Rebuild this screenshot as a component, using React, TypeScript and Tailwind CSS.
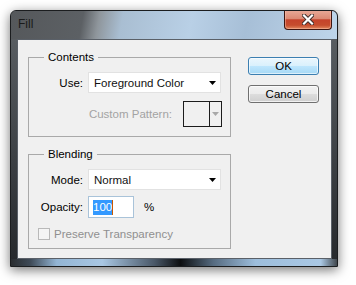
import React from 'react';

const FONT = { fontFamily: '"Liberation Sans", Arial, sans-serif' };

function DropArrow({ color = '#000' }: { color?: string }) {
  return (
    <svg width="7" height="4" viewBox="0 0 7 4">
      <path d="M0 0 H7 L3.5 4 Z" fill={color} />
    </svg>
  );
}

function Select({ value, h }: { value: string; h: string }) {
  return (
    <div className={`ml-[5px] w-[133px] ${h} bg-white border border-[#e2e2e2] flex items-center justify-between pl-[5px] pr-[4px]`}>
      <span className="text-[#111]">{value}</span>
      <DropArrow />
    </div>
  );
}

function CloseButton() {
  return (
    <div className="-mt-px mr-[5px] w-[48px] h-[20px] rounded-b-[4px] border border-t-0 border-[#3d1510] bg-[linear-gradient(to_bottom,#e9ab9a_0%,#dc8a74_45%,#c5432b_52%,#c64d2e_80%,#e2895f_100%)] shadow-[inset_0_0_0_1px_rgba(255,200,180,0.45)] flex items-center justify-center">
      <svg width="12" height="11" viewBox="0 0 12 11">
        <path d="M2 1.5 L10 9.5 M10 1.5 L2 9.5" stroke="#3a2a28" strokeWidth="4" strokeLinecap="square" />
        <path d="M2 1.5 L10 9.5 M10 1.5 L2 9.5" stroke="#ffffff" strokeWidth="2.2" strokeLinecap="square" />
      </svg>
    </div>
  );
}

export default function App() {
  return (
    <div className="w-[356px] h-[285px] bg-white overflow-hidden pt-[10px] pl-[10px]" style={FONT}>
      <div className="w-[328px] h-[257px] rounded-t-[6px] border border-[#1b1d1f] bg-[linear-gradient(to_bottom,#5e6367,#3b3f43_60%,#25282b)] shadow-[0_3px_12px_rgba(0,0,0,0.55)] flex flex-col overflow-hidden">
        {/* Title bar */}
        <div className="h-[28px] shrink-0 flex items-start justify-between rounded-t-[5px] bg-[linear-gradient(100deg,#55585b_0%,#5c6064_22%,#8f969c_27%,#a9bed2_34%,#b9d0e6_55%,#a7bfd7_72%,#bed5ea_100%)]">
          <span className="pl-[7px] pt-[6px] text-[12px] leading-[14px] text-[#1a1a1a]">Fill</span>
          <CloseButton />
        </div>

        {/* Body */}
        <div className="flex-1 flex flex-col">
          <div className="pl-[6px] pr-[5px] flex-1 flex">
            <div className="w-[315px] h-[220px] border border-[#5a6068] bg-[#f0f0f0] flex pl-[10px] pt-[10px] text-[11.5px] leading-[14px] text-black">
              {/* Left column */}
              <div className="w-[203px] flex flex-col">
                <fieldset className="border border-[#a9a9a9] p-0 m-0 pb-[9px]">
                  <legend className="ml-[15px] px-[4px] leading-[14px]">Contents</legend>
                  <div className="mt-[8px] flex items-center">
                    <span className="w-[54px] text-right">Use:</span>
                    <Select value="Foreground Color" h="h-[21px]" />
                  </div>
                  <div className="mt-[8px] flex items-center justify-end pr-[8px]">
                    <span className="text-[#a3a3a3] mr-[11px]">Custom Pattern:</span>
                    <div className="w-[39px] h-[26px] border border-[#1c1c1c] flex">
                      <div className="flex-1 border-r border-[#1c1c1c]" />
                      <div className="w-[11px] flex items-center justify-center">
                        <DropArrow color="#a8a8a8" />
                      </div>
                    </div>
                  </div>
                </fieldset>

                <fieldset className="mt-[10px] border border-[#a9a9a9] p-0 m-0 pb-[7px]">
                  <legend className="ml-[15px] px-[4px] leading-[14px]">Blending</legend>
                  <div className="mt-[8px] flex items-center">
                    <span className="w-[54px] text-right">Mode:</span>
                    <Select value="Normal" h="h-[21px]" />
                  </div>
                  <div className="mt-[6px] flex items-center">
                    <span className="w-[54px] text-right">Opacity:</span>
                    <div className="ml-[5px] w-[46px] h-[22px] bg-white border border-[#a9c3d9] flex items-center pl-[4px]">
                      <span className="bg-[#3399ff] text-white leading-[15px]">100</span>
                      <span className="w-px h-[15px] bg-[#c85a00]" />
                    </div>
                    <span className="ml-[10px]">%</span>
                  </div>
                  <div className="mt-[9px] pl-[9px] flex items-center">
                    <div className="w-[12px] h-[12px] border border-[#b9b9b9] bg-[#f5f5f5]" />
                    <span className="ml-[4px] text-[#8f8f8f]">Preserve Transparency</span>
                  </div>
                </fieldset>
              </div>

              {/* Buttons */}
              <div className="ml-[17px] mt-[7px] flex flex-col">
                <button className="w-[71px] h-[18px] rounded-[3px] border border-[#3c7fb1] bg-[linear-gradient(to_bottom,#eaf6fd,#d9f0fc_50%,#bee6fd_50%,#a7d9f5)] shadow-[inset_0_0_0_1px_rgba(255,255,255,0.6)] flex items-center justify-center text-black">
                  OK
                </button>
                <button className="mt-[10px] w-[71px] h-[18px] rounded-[3px] border border-[#707070] bg-[linear-gradient(to_bottom,#f2f2f2,#ebebeb_50%,#dddddd_50%,#cfcfcf)] shadow-[inset_0_0_0_1px_rgba(255,255,255,0.7)] flex items-center justify-center text-black">
                  Cancel
                </button>
              </div>
            </div>
          </div>
          {/* Bottom frame */}
          <div className="h-[7px] shrink-0 bg-[linear-gradient(to_right,#2a2d30_0%,#3f4b58_6%,#93b5d4_14%,#a9c7e3_28%,#4a5868_44%,#0d0f11_52%,#566b80_62%,#9dbedc_75%,#aac8e4_95%,#40464c_100%)]" />
        </div>
      </div>
    </div>
  );
}
